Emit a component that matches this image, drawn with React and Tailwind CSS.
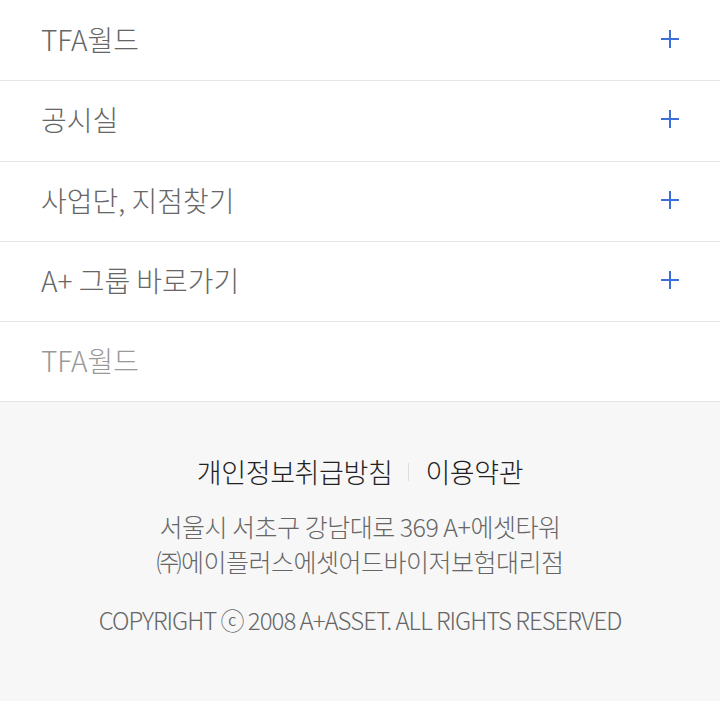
import React from 'react';

const menus = [
  { label: 'TFA월드', expandable: true },
  { label: '공시실', expandable: true },
  { label: '사업단, 지점찾기', expandable: true },
  { label: 'A+ 그룹 바로가기', expandable: true },
  { label: 'TFA월드', expandable: false },
];

function PlusIcon() {
  return (
    <svg width="20" height="20" viewBox="0 0 20 20" className="shrink-0">
      <path d="M10 1v18M1 10h18" stroke="#3d6fdb" strokeWidth="2" />
    </svg>
  );
}

export default function App() {
  return (
    <div className="w-[720px] min-h-[701px] bg-[#f7f7f7] font-['Noto_Sans_CJK_KR',sans-serif]">
      <ul className="bg-white pt-px">
        {menus.map((m, i) => (
          <li
            key={i}
            className="h-[80.25px] flex items-center justify-between pl-[41px] pr-[40px] pb-[3px] border-b border-[#e5e5e5]"
          >
            <span
              className={`text-[28px] font-light ${m.expandable ? 'text-[#666]' : 'text-[#999]'}`}
            >
              {m.label}
            </span>
            {m.expandable && <PlusIcon />}
          </li>
        ))}
      </ul>

      <footer className="pt-[52px] pb-[60px] text-center">
        <div className="flex items-center justify-center h-[36px] text-[27px] text-[#222] font-light tracking-[-0.4px]">
          <span>개인정보취급방침</span>
          <span className="mx-4 w-px h-[18px] bg-[#ddd]" />
          <span>이용약관</span>
        </div>
        <p className="mt-[19px] text-[25px] leading-[35px] text-[#666] font-light tracking-[-0.5px]">
          서울시 서초구 강남대로 369 A+에셋타워
          <br />
          ㈜에이플러스에셋어드바이저보험대리점
        </p>
        <p className="mt-[23px] text-[24px] leading-[36px] text-[#666] font-light tracking-[-1px]">
          COPYRIGHT ⓒ 2008 A+ASSET. ALL RIGHTS RESERVED
        </p>
      </footer>
    </div>
  );
}
